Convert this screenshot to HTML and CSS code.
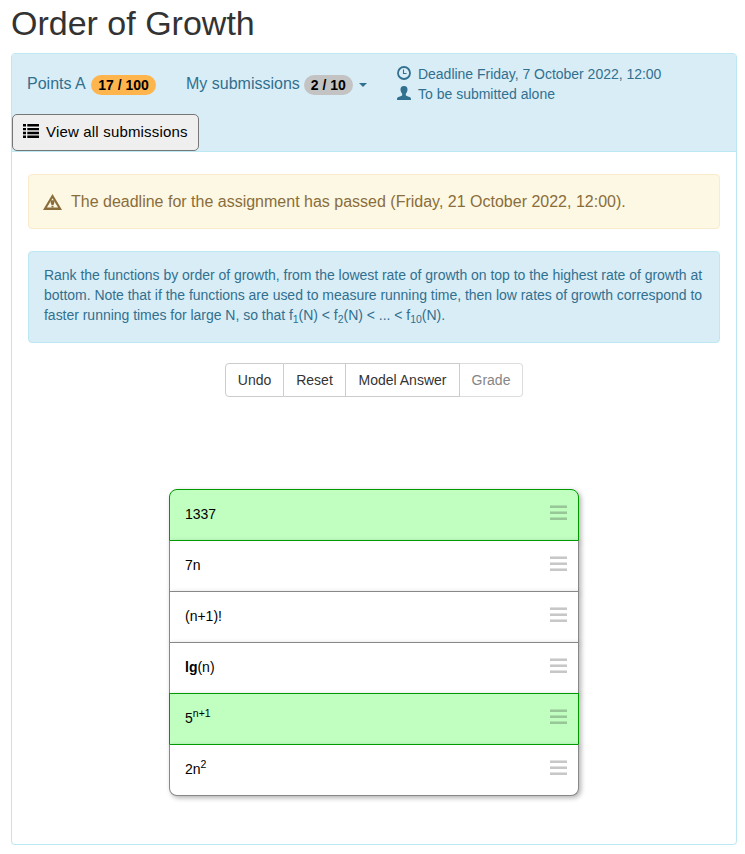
FILE: index.html
```html
<!DOCTYPE html>
<html lang="en">
<head>
<meta charset="utf-8">
<title>Order of Growth</title>
<link rel="stylesheet" href="styles.css">
</head>
<body>
<h1>Order of Growth</h1>
<section class="panel">
  <header class="panel-head">
    <div class="stats">
      <div class="points">Points A <span class="badge badge-warn">17 / 100</span></div>
      <div class="mine">My submissions <span class="badge">2 / 10</span><span class="caret"></span></div>
      <ul class="facts">
        <li><svg class="icon" viewBox="0 0 14 14"><circle cx="7" cy="7" r="6" fill="none" stroke="currentColor" stroke-width="1.8"/><path d="M6.5 3.5V7.5H9.5" fill="none" stroke="currentColor" stroke-width="1.1"/></svg><span class="deadline">Deadline Friday, 7 October 2022, 12:00</span></li>
        <li><svg class="icon" viewBox="0 0 14 14"><path d="M7 0C4.4 0 3.4 1.7 3.5 3.8C3.6 5.6 4.4 6.9 5.2 7.7V9.2C5 9.8 2.4 10.4 1.2 11.1C.3 11.6 0 12.2 0 14H14C14 12.2 13.7 11.6 12.8 11.1C11.6 10.4 9 9.8 8.8 9.2V7.7C9.6 6.9 10.4 5.6 10.5 3.8C10.6 1.7 9.6 0 7 0Z" fill="currentColor"/></svg><span>To be submitted alone</span></li>
      </ul>
    </div>
    <button class="view-all"><svg class="list-icon" viewBox="0 0 16 14"><path d="M0 0h3v2.5H0zM4.3 0H16v2.5H4.3zM0 4h3v2.3H0zM4.3 4H16v2.3H4.3zM0 7.8h3v2.4H0zM4.3 7.8H16v2.4H4.3zM0 11.6h3V14H0zM4.3 11.6H16V14H4.3z" fill="currentColor"/></svg><span>View all submissions</span></button>
  </header>
  <div class="panel-body">
    <div class="alert warning">
      <svg class="warn-icon" viewBox="0 0 19 16"><path fill-rule="evenodd" d="M9.5 0L19 16H0ZM9.5 4.2L3.9 13.5H15.1Z" fill="currentColor"/><path d="M7.7 6.2H11.3V8.8L10.5 11H8.5L7.7 8.8ZM8.5 11.7H10.5V13.5H8.5Z" fill="currentColor"/></svg>
      <span>The deadline for the assignment has passed (Friday, 21 October 2022, 12:00).</span>
    </div>
    <div class="alert info">
      <div>Rank the functions by order of growth, from the lowest rate of growth on top to the highest rate of growth at</div>
      <div>bottom. Note that if the functions are used to measure running time, then low rates of growth correspond to</div>
      <div>faster running times for large N, so that f<sub>1</sub>(N) &lt; f<sub>2</sub>(N) &lt; ... &lt; f<sub>10</sub>(N).</div>
    </div>
    <div class="buttons">
      <button class="b-undo">Undo</button><button class="b-reset">Reset</button><button class="b-model">Model Answer</button><button class="b-grade" disabled>Grade</button>
    </div>
    <ul class="rank">
      <li class="ok"><span>1337</span><i class="grip"></i></li>
      <li><span>7n</span><i class="grip"></i></li>
      <li><span>(n+1)!</span><i class="grip"></i></li>
      <li><span><b>lg</b>(n)</span><i class="grip"></i></li>
      <li class="ok"><span>5<sup>n+1</sup></span><i class="grip"></i></li>
      <li><span>2n<sup>2</sup></span><i class="grip"></i></li>
    </ul>
  </div>
</section>
</body>
</html>
```
FILE: styles.css
```css
* { box-sizing: border-box; }
body {
  margin: 0;
  padding: 3px 8px 0 11px;
  background: #fff;
  color: #333;
  font: 14px/20px "Liberation Sans", Arial, sans-serif;
}
ul { list-style: none; margin: 0; padding: 0; }
button { font-family: inherit; margin: 0; }
h1 { margin: 0; height: 50px; font-size: 34px; line-height: 40px; font-weight: 400; }
.panel {
  height: 792px;
  border: 1px solid #bce8f1;
  border-radius: 4px;
  box-shadow: 0 1px 1px rgba(0,0,0,.05);
}
.panel-head {
  height: 98px;
  background: #d9edf7;
  border-bottom: 1px solid #bce8f1;
  border-radius: 3px 3px 0 0;
  color: #31708f;
}
.stats { display: flex; height: 60px; padding: 10px 0 0 15px; font-size: 16px; white-space: nowrap; }
.points, .mine { display: flex; align-items: center; height: 41px; line-height: 20px; }
.points { width: 159px; padding-bottom: 1px; }
.mine { width: 211px; padding-bottom: 1px; }
.badge {
  height: 20px;
  margin: 2px 0 0 4px;
  padding: 0 7px;
  border-radius: 10px;
  background: #c3c3c3;
  color: #000;
  font-size: 14px;
  font-weight: 700;
  line-height: 20px;
}
.badge-warn { margin-left: 5px; padding: 0 7.5px; background: #ffb54d; }
.caret { margin: 2px 0 0 6px; border: 4px solid transparent; border-top-color: currentColor; border-bottom: 0; }
.facts { font-size: 14px; line-height: 20px; }
.facts li { display: flex; gap: 7px; }
.deadline { letter-spacing: -.02px; }
.icon { width: 14px; height: 14px; margin-top: 2px; }
.view-all {
  display: flex;
  align-items: center;
  gap: 7px;
  width: 187px;
  height: 37px;
  padding: 0 10px 2px;
  border: 1px solid #767676;
  border-radius: 5px;
  background: #efefef;
  color: #000;
  font-size: 15px;
  letter-spacing: .18px;
  white-space: nowrap;
}
.list-icon { width: 16px; height: 14px; margin-top: -1px; }
.panel-body { padding: 22px 16px; }
.alert { border: 1px solid; border-radius: 4px; white-space: nowrap; }
.warning {
  display: flex;
  align-items: center;
  gap: 9px;
  height: 55px;
  padding-left: 14px;
  border-color: #faebcc;
  background: #fcf8e3;
  color: #8a6d3b;
  font-size: 16px;
}
.warn-icon { width: 19px; height: 16px; }
.info {
  height: 92px;
  margin-top: 22px;
  padding: 13px 15px;
  border-color: #bce8f1;
  background: #d9edf7;
  color: #31708f;
  letter-spacing: -.024px;
}
sub, sup { position: relative; font-size: 75%; line-height: 0; vertical-align: baseline; }
sub { bottom: -.25em; }
sup { top: -.6em; }
.buttons { display: flex; width: 298px; margin: 20px auto 0 197px; }
.buttons button {
  height: 34px;
  padding: 0;
  border: 1px solid #ccc;
  border-left-width: 0;
  background: #fff;
  color: #333;
  font-size: 14px;
}
.buttons .b-undo { width: 59px; border-left-width: 1px; border-radius: 4px 0 0 4px; }
.buttons .b-reset { width: 62px; }
.buttons .b-model { width: 114px; }
.buttons .b-grade { width: 63px; border-color: #ddd; border-radius: 0 4px 4px 0; color: #858585; }
.rank { width: 410px; margin: 92px 0 0 141px; color: #000; }
.rank li {
  position: relative;
  display: flex;
  justify-content: space-between;
  height: 52px;
  margin-bottom: -1px;
  padding: 14px 11px 0 15px;
  border: 1px solid #888;
  background: #fff;
  box-shadow: 2px 2px 5px rgba(0,0,0,.3);
}
.rank li:first-child { border-radius: 8px 8px 0 0; }
.rank li:last-child { border-radius: 0 0 8px 8px; }
.rank .ok { border-color: #090; background: #c1ffc1; }
.rank .ok + li { border-top-color: #090; }
.grip {
  width: 17px;
  height: 15px;
  margin-top: 1px;
  background: repeating-linear-gradient(to bottom, rgba(0,0,0,.12) 0 1px, rgba(0,0,0,.22) 1px 3px, transparent 3px 6px);
}
```
